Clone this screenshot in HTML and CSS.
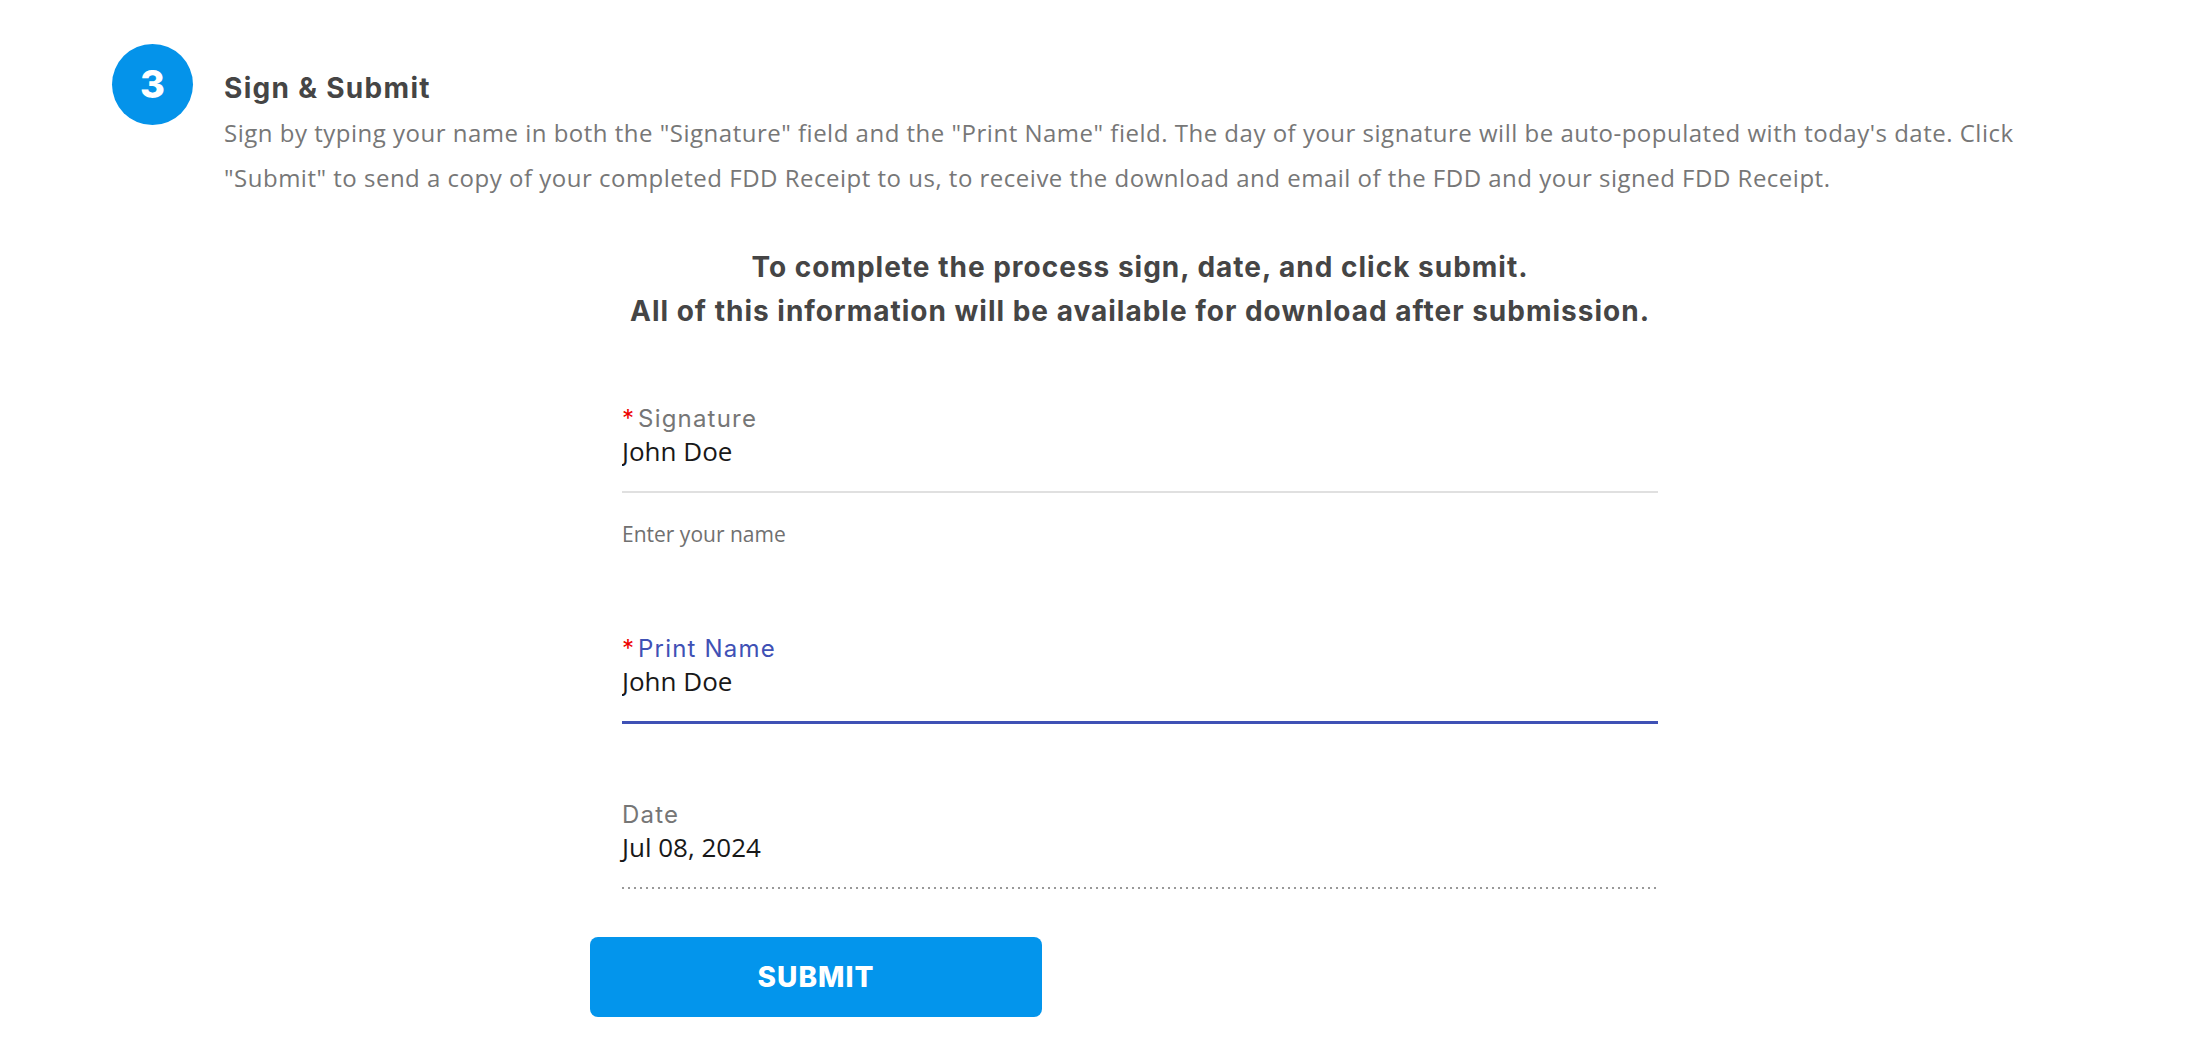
FILE: index.html
```html
<!DOCTYPE html>
<html lang="en">
<head>
    <meta charset="UTF-8">
    <meta name="viewport" content="width=device-width, initial-scale=1.0">
    <title>FDD Receipt | Sign &amp; Submit</title>
    <link rel="stylesheet" href="styles.css">
</head>
<body>
    <div class="step">
        <div class="step-num">3</div>

        <div class="step-body">
            <h2 class="step-title">Sign &amp; Submit</h2>
            <p class="step-desc">Sign by typing your name in both the "Signature" field and the "Print Name" field. The day of your signature will be auto-populated with today's date. Click "Submit" to send a copy of your completed FDD Receipt to us, to receive the download and email of the FDD and your signed FDD Receipt.</p>

            <div class="instructions">
                To complete the process sign, date, and click submit.<br>
                All of this information will be available for download after submission.
            </div>

            <form class="sign-form" onsubmit="return false;">
                <div class="field">
                    <label class="field-label" for="signature"><abbr class="required">*</abbr>Signature</label>
                    <input class="field-input" type="text" id="signature" value="John Doe">
                </div>
                <div class="field-help">Enter your name</div>

                <div class="field field-focus">
                    <label class="field-label" for="print-name"><abbr class="required">*</abbr>Print Name</label>
                    <input class="field-input" type="text" id="print-name" value="John Doe">
                </div>

                <div class="field field-readonly">
                    <span class="field-label">Date</span>
                    <div class="field-value">Jul 08, 2024</div>
                </div>

                <button class="submit-btn" type="submit">SUBMIT</button>
            </form>
        </div>
    </div>
</body>
</html>
```

FILE: styles.css
```css
body {
    margin: 0;
    padding: 0;
    background-color: #fff;
    font-family: "Open Sans", Arial, sans-serif;
}

.step {
    display: flex;
    align-items: flex-start;
    padding: 44px 0 0 112px;
}

.step-num {
    flex: none;
    width: 81px;
    height: 81px;
    border-radius: 50%;
    background-color: #0493ea;
    color: #fff;
    font-family: Inter, sans-serif;
    font-weight: 800;
    font-size: 38px;
    line-height: 81px;
    text-align: center;
}

.step-body {
    width: 1832px;
    margin-left: 31px;
}

.step-title {
    margin: 26px 0 0 0;
    font-family: Inter, sans-serif;
    font-weight: 700;
    font-size: 28px;
    letter-spacing: 1.3px;
    line-height: 36px;
    color: #454545;
}

.step-desc {
    margin: 4px 0 0 0;
    font-family: "Open Sans", sans-serif;
    font-size: 24px;
    letter-spacing: 0.5px;
    line-height: 45px;
    color: #777;
}

.instructions {
    margin-top: 45px;
    text-align: center;
    font-family: Inter, sans-serif;
    font-weight: 700;
    font-size: 28px;
    letter-spacing: 1px;
    line-height: 44px;
    color: #454545;
}

.sign-form {
    width: 1100px;
    margin: 70px auto 0 auto;
}

.field {
    margin: 0 32px;
    padding-bottom: 24px;
    border-bottom: 2px solid #e0e0e0;
}

.field-focus {
    margin-top: 85px;
    border-bottom: 3px solid #3f51b5;
}

.field-focus .field-label {
    color: #3f51b5;
}

.field-readonly {
    margin-top: 75px;
    border-bottom: none;
    padding-bottom: 26px;
    background-image: linear-gradient(to right, #999 2px, transparent 2px);
    background-size: 6px 2px;
    background-repeat: repeat-x;
    background-position: left bottom;
}

.field-label {
    display: block;
    font-family: Inter, sans-serif;
    font-size: 24px;
    letter-spacing: 1.2px;
    line-height: 32px;
    color: #767676;
}

.required {
    color: #e00;
    text-decoration: none;
    letter-spacing: 0;
    margin-right: 4px;
}

.field-input,
.field-value {
    display: block;
    width: 100%;
    margin: 0;
    padding: 0;
    border: none;
    outline: none;
    background: transparent;
    font-family: "Open Sans", sans-serif;
    font-size: 26px;
    line-height: 32px;
    height: 32px;
    color: #181818;
}

.field-help {
    margin: 27px 32px 0 32px;
    font-family: "Open Sans", sans-serif;
    font-size: 21px;
    line-height: 28px;
    color: #707070;
}

.submit-btn {
    display: block;
    margin-top: 48px;
    width: 452px;
    height: 80px;
    border: none;
    border-radius: 8px;
    background-color: #0395ec;
    color: #fff;
    font-family: Inter, sans-serif;
    font-weight: 800;
    font-size: 28px;
    letter-spacing: 1px;
    cursor: pointer;
}
```
